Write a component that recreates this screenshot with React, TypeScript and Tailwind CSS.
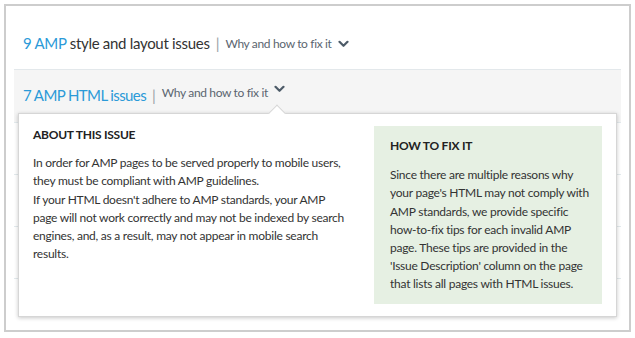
function Chevron() {
  return (
    <svg width="11" height="8" viewBox="0 0 11 8" className="ml-[6px] mt-[1px]">
      <polyline points="1.5,1.8 5.5,5.8 9.5,1.8" fill="none" stroke="#4d5b68" strokeWidth="2.2" strokeLinecap="round" strokeLinejoin="round" />
    </svg>
  );
}

function Why() {
  return (
    <>
      <span className="mx-[6px] text-[15px] text-[#9aa0a6]">|</span>
      <span className="text-[12px] tracking-[-0.35px] text-[#5b6570]">Why and how to fix it</span>
      <Chevron />
    </>
  );
}

export default function App() {
  return (
    <div className="w-[635px] h-[338px] bg-white p-[4px]" style={{ fontFamily: '"Lato", "Open Sans", sans-serif' }}>
      <div className="relative h-[328px] border-2 border-[#cdcdcd] px-[8px]">
        {/* Row 1 */}
        <div className="flex h-[63px] items-center pl-[9px] pt-[12px]">
          <span className="text-[15px] tracking-[-0.3px] text-[#333]">
            <span className="text-[#2b9ad8]">9 AMP</span> style and layout issues
          </span>
          <Why />
        </div>
        {/* Row 2 */}
        <div className="flex h-[53px] items-start border-t border-[#e3e8eb] bg-[#f5f5f5] pl-[9px] pt-[14px]">
          <span className="text-[15px] tracking-[-0.6px] text-[#2b9ad8]">7 AMP HTML issues</span>
          <Why />
        </div>
        <div className="h-[52px] border-t border-[#e3eaed]" />
        <div className="h-[52px] border-t border-[#e3eaed]" />
        <div className="h-[52px] border-t border-[#e3eaed]" />
        <div className="border-t border-[#e3eaed]" />

        {/* Popup */}
        <div className="absolute left-[12px] top-[107px] flex h-[204px] w-[599px] border border-[#d6d6d6] bg-white pl-[14px] pr-[14px] pt-[12px] shadow-[0_1px_4px_rgba(0,0,0,0.22)]">
          <div className="absolute left-[252px] top-[-7px] h-[12px] w-[12px] rotate-45 border-l border-t border-[#d6d6d6] bg-white" />
          <div className="flex-1 text-[12px] leading-[18.2px] tracking-[-0.25px] text-[#333]">
            <div className="font-bold text-[#222]">ABOUT THIS ISSUE</div>
            <div className="mt-[10px] whitespace-nowrap">
              In order for AMP pages to be served properly to mobile users,
              <br />
              they must be compliant with AMP guidelines.
              <br />
              If your HTML doesn't adhere to AMP standards, your AMP
              <br />
              page will not work correctly and may not be indexed by search
              <br />
              engines, and, as a result, may not appear in mobile search
              <br />
              results.
            </div>
          </div>
          <div className="h-[178px] w-[228px] bg-[#e6f0e3] pl-[16px] pt-[11px] text-[12px] leading-[18.2px] tracking-[-0.25px] text-[#333]">
            <div className="font-bold text-[#222]">HOW TO FIX IT</div>
            <div className="mt-[11px] whitespace-nowrap">
              Since there are multiple reasons why
              <br />
              your page's HTML may not comply with
              <br />
              AMP standards, we provide specific
              <br />
              how-to-fix tips for each invalid AMP
              <br />
              page. These tips are provided in the
              <br />
              'Issue Description' column on the page
              <br />
              that lists all pages with HTML issues.
            </div>
          </div>
        </div>
      </div>
    </div>
  );
}
